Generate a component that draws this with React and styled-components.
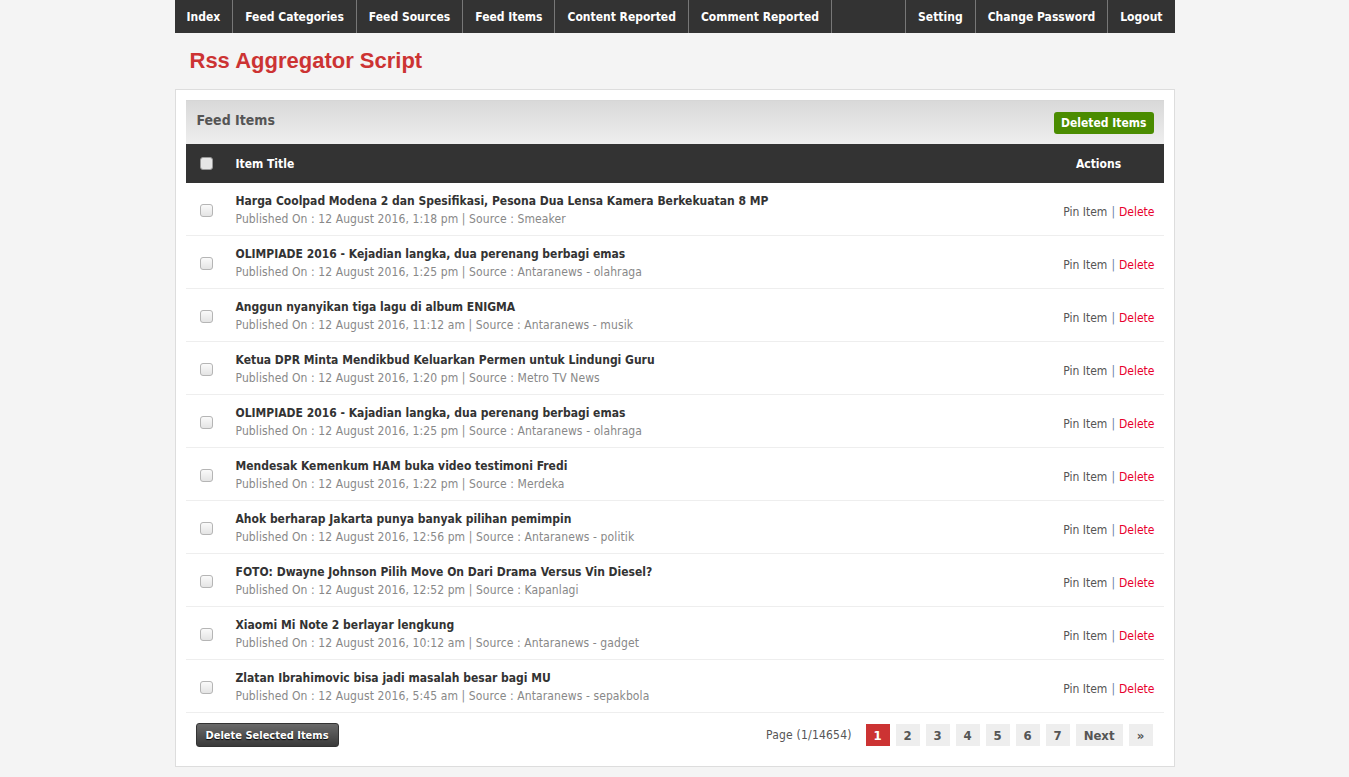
import React from "react";
import styled, { createGlobalStyle } from "styled-components";

const GlobalStyle = createGlobalStyle`
  html, body {
    margin: 0;
    padding: 0;
    background: #f4f4f4;
    font-family: "DejaVu Sans Condensed", "DejaVu Sans", sans-serif;
  }
`;

const Page = styled.div`
  width: 1000px;
  margin: 0 auto;
`;

const Nav = styled.nav`
  display: flex;
  height: 33px;
  background: #333;
`;

const NavItem = styled.a`
  display: flex;
  align-items: center;
  padding: 1px 12px 0;
  color: #fff;
  font-size: 12px;
  font-weight: bold;
  text-decoration: none;
  border-left: ${(p) => (p.$first ? "none" : "1px solid #777")};
  white-space: nowrap;
`;

const NavSpacer = styled.div`
  flex: 1;
  border-left: 1px solid #777;
`;

const NavRight = styled.div`
  display: flex;
`;

const SiteTitle = styled.h1`
  margin: 0;
  padding: 15px 15px 0;
  height: 42px;
  box-sizing: border-box;
  font-family: "Liberation Sans", Arial, sans-serif;
  font-size: 22px;
  font-weight: bold;
  color: #cc3333;
`;

const Box = styled.div`
  margin-top: 14px;
  background: #fff;
  border: 1px solid #ddd;
  padding: 10px 10px 19px;
`;

const PanelHead = styled.div`
  display: flex;
  align-items: center;
  justify-content: space-between;
  height: 44px;
  box-sizing: border-box;
  padding: 0 10px 0 11px;
  border-top: 1px solid #d6d6d6;
  background: linear-gradient(#d9d9d9, #eeeeee);
`;

const PanelTitle = styled.span`
  font-size: 14px;
  font-weight: bold;
  color: #555;
  padding-bottom: 5px;
`;

const GreenButton = styled.a`
  display: inline-flex;
  align-items: center;
  height: 22px;
  padding: 0 7px;
  border-radius: 3px;
  background: #4a8c00;
  color: #fff;
  font-size: 12px;
  font-weight: bold;
  text-decoration: none;
`;

const Table = styled.table`
  width: 100%;
  border-collapse: collapse;
`;

const HeadCell = styled.th`
  height: 39px;
  padding: 0;
  background: #333;
  color: #fff;
  font-size: 12px;
  font-weight: bold;
  text-align: ${(p) => p.$align || "left"};
  width: ${(p) => p.$w || "auto"};
`;

const Row = styled.tr`
  border-bottom: 1px solid #eee;
`;

const Cell = styled.td`
  height: 50px;
  padding: 2px ${(p) => p.$pr || 0}px 0 0;
  vertical-align: middle;
  text-align: ${(p) => p.$align || "left"};
`;

const Check = styled.span`
  display: block;
  width: 11px;
  height: 11px;
  margin-left: 14px;
  border: 1px solid ${(p) => (p.$dark ? "#999" : "#b5b5b5")};
  border-radius: 3px;
  background: ${(p) => (p.$dark ? "#e6e6e6" : "linear-gradient(#fafafa, #e4e4e4)")};
`;

const ItemTitle = styled.div`
  font-size: 12px;
  font-weight: bold;
  color: #333;
  line-height: 18px;
`;

const Meta = styled.div`
  font-size: 12px;
  color: #888;
  line-height: 18px;
  letter-spacing: 0.1px;
`;

const Actions = styled.span`
  font-size: 12px;
  color: #555;
`;

const Sep = styled.span`
  color: #6a7fa8;
  margin: 0 4px;
`;

const DeleteLink = styled.a`
  color: #e8002d;
  text-decoration: none;
`;

const Footer = styled.div`
  display: flex;
  align-items: center;
  justify-content: space-between;
  padding: 10px 11px 0 10px;
`;

const DarkButton = styled.button`
  height: 24px;
  padding: 0 9px;
  border: 1px solid #333;
  border-radius: 3px;
  background: linear-gradient(#6a6a6a, #3a3a3a);
  color: #fff;
  font-family: "DejaVu Sans Condensed", "DejaVu Sans", sans-serif;
  font-size: 11px;
  font-weight: bold;
  text-shadow: 0 1px 1px #000;
`;

const Pager = styled.div`
  display: flex;
  align-items: center;
  gap: 6px;
`;

const PageInfo = styled.span`
  font-size: 12px;
  color: #555;
  margin-right: 8px;
  letter-spacing: 0.2px;
`;

const PageBox = styled.a`
  display: flex;
  align-items: center;
  justify-content: center;
  min-width: 24px;
  height: 22px;
  padding: 0 ${(p) => p.$pad || 0}px;
  box-sizing: border-box;
  background: ${(p) => (p.$active ? "#cc3333" : "#eeeeee")};
  color: ${(p) => (p.$active ? "#fff" : "#555")};
  font-size: 13px;
  font-weight: bold;
  text-decoration: none;
`;

const items = [
  ["Harga Coolpad Modena 2 dan Spesifikasi, Pesona Dua Lensa Kamera Berkekuatan 8 MP", "1:18 pm", "Smeaker"],
  ["OLIMPIADE 2016 - Kejadian langka, dua perenang berbagi emas", "1:25 pm", "Antaranews - olahraga"],
  ["Anggun nyanyikan tiga lagu di album ENIGMA", "11:12 am", "Antaranews - musik"],
  ["Ketua DPR Minta Mendikbud Keluarkan Permen untuk Lindungi Guru", "1:20 pm", "Metro TV News"],
  ["OLIMPIADE 2016 - Kajadian langka, dua perenang berbagi emas", "1:25 pm", "Antaranews - olahraga"],
  ["Mendesak Kemenkum HAM buka video testimoni Fredi", "1:22 pm", "Merdeka"],
  ["Ahok berharap Jakarta punya banyak pilihan pemimpin", "12:56 pm", "Antaranews - politik"],
  ["FOTO: Dwayne Johnson Pilih Move On Dari Drama Versus Vin Diesel?", "12:52 pm", "Kapanlagi"],
  ["Xiaomi Mi Note 2 berlayar lengkung", "10:12 am", "Antaranews - gadget"],
  ["Zlatan Ibrahimovic bisa jadi masalah besar bagi MU", "5:45 am", "Antaranews - sepakbola"],
];

const leftNav = ["Index", "Feed Categories", "Feed Sources", "Feed Items", "Content Reported", "Comment Reported"];
const rightNav = ["Setting", "Change Password", "Logout"];

export default function App() {
  return (
    <>
      <GlobalStyle />
      <Page>
        <Nav>
          {leftNav.map((n, i) => (
            <NavItem key={n} $first={i === 0}>{n}</NavItem>
          ))}
          <NavSpacer />
          <NavRight>
            {rightNav.map((n) => (
              <NavItem key={n}>{n}</NavItem>
            ))}
          </NavRight>
        </Nav>
        <SiteTitle>Rss Aggregator Script</SiteTitle>
        <Box>
          <PanelHead>
            <PanelTitle>Feed Items</PanelTitle>
            <GreenButton>Deleted Items</GreenButton>
          </PanelHead>
          <Table>
            <thead>
              <tr>
                <HeadCell $w="50px"><Check $dark /></HeadCell>
                <HeadCell>Item Title</HeadCell>
                <HeadCell $align="center" $w="130px">Actions</HeadCell>
              </tr>
            </thead>
            <tbody>
              {items.map(([title, time, src], i) => (
                <Row key={i}>
                  <Cell><Check /></Cell>
                  <Cell>
                    <ItemTitle>{title}</ItemTitle>
                    <Meta>Published On : 12 August 2016, {time} | Source : {src}</Meta>
                  </Cell>
                  <Cell $align="right" $pr={9}>
                    <Actions>
                      Pin Item<Sep>|</Sep><DeleteLink>Delete</DeleteLink>
                    </Actions>
                  </Cell>
                </Row>
              ))}
            </tbody>
          </Table>
          <Footer>
            <DarkButton>Delete Selected Items</DarkButton>
            <Pager>
              <PageInfo>Page (1/14654)</PageInfo>
              <PageBox $active>1</PageBox>
              {[2, 3, 4, 5, 6, 7].map((n) => (
                <PageBox key={n}>{n}</PageBox>
              ))}
              <PageBox $pad={8}>Next</PageBox>
              <PageBox>»</PageBox>
            </Pager>
          </Footer>
        </Box>
      </Page>
    </>
  );
}
